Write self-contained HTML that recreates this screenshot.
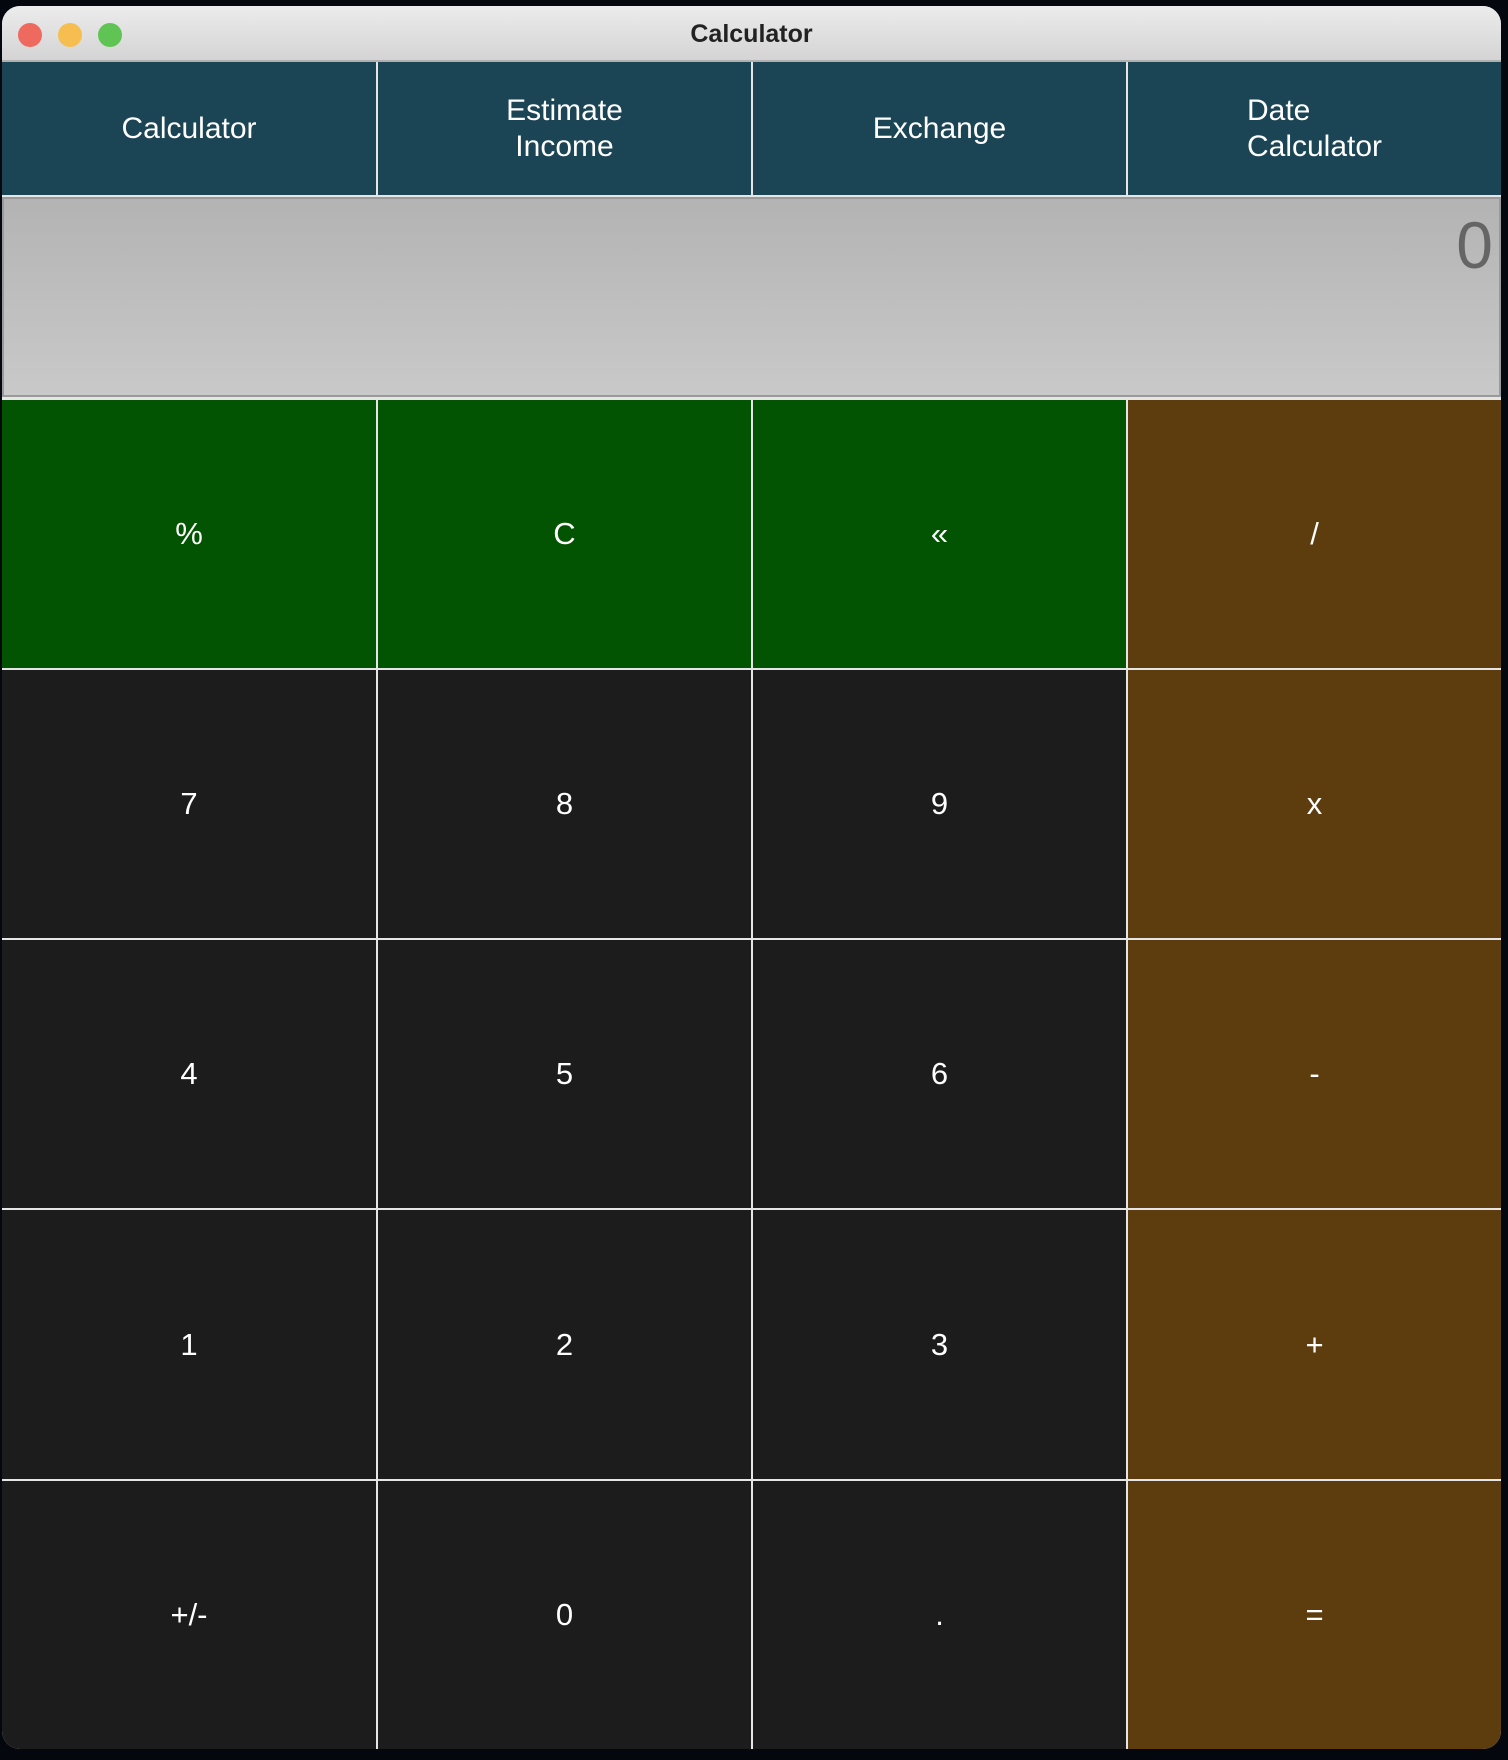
<!DOCTYPE html>
<html><head><meta charset="utf-8"><style>
*{margin:0;padding:0;box-sizing:border-box}
body{width:1508px;height:1760px;background:#05070e;overflow:hidden;font-family:"Liberation Sans",sans-serif;position:relative}
.win{position:absolute;left:2px;top:6px;width:1499px;height:1743px;border-radius:18px;overflow:hidden;background:#e6e6e6}
.title{position:absolute;left:0;top:0;width:100%;height:56px;background:linear-gradient(#ececec,#d4d4d4);border-bottom:2px solid #b0b0b0;text-align:center;font-weight:bold;font-size:25px;line-height:56px;color:#222}
.dot{position:absolute;top:17px;width:24px;height:24px;border-radius:50%}
.cell{position:absolute;display:flex;align-items:center;justify-content:center;color:#fff;text-align:center}
.tab{background:#1b4454;font-size:30px;line-height:36px;top:56px;height:133px}
.disp{position:absolute;left:0;top:191px;width:1499px;height:200px;background:linear-gradient(#b3b3b3,#c9c9c9);border:2px solid #9a9a9a}
.btn{font-size:31px}
.g{background:#025402}.o{background:#5d3c0e}.k{background:#1c1c1c}
</style></head><body>
<div class="win">
<div class="title">Calculator
<div class="dot" style="left:16px;background:#ee6a5f"></div>
<div class="dot" style="left:56px;background:#f6be4f"></div>
<div class="dot" style="left:96px;background:#5fc454"></div>
</div>
<div class="cell tab" style="left:0;width:374px">Calculator</div>
<div class="cell tab" style="left:376px;width:373px">Estimate<br>Income</div>
<div class="cell tab" style="left:751px;width:373px">Exchange</div>
<div class="cell tab" style="left:1126px;width:373px;text-align:left">Date<br>Calculator</div>
<div class="disp"><div style="position:absolute;right:6px;top:8px;font-size:66px;color:#656565">0</div></div>
<div id="grid"></div>
</div>
<script>
var rows=[["%","C","«","/"],["7","8","9","x"],["4","5","6","-"],["1","2","3","+"],["+/-","0",".","="]];
var xs=[0,376,751,1126,1499],ys=[394,664,934,1204,1475,1743];
var h="";
for(var r=0;r<5;r++)for(var c=0;c<4;c++){
var cl=c==3?"o":(r==0?"g":"k");
h+='<div class="cell btn '+cl+'" style="left:'+xs[c]+'px;top:'+ys[r]+'px;width:'+(xs[c+1]-xs[c]-(c<3?2:0))+'px;height:'+(ys[r+1]-ys[r]-(r<4?2:0))+'px">'+rows[r][c]+'</div>';}
document.getElementById("grid").innerHTML=h;
</script>
</body></html>
